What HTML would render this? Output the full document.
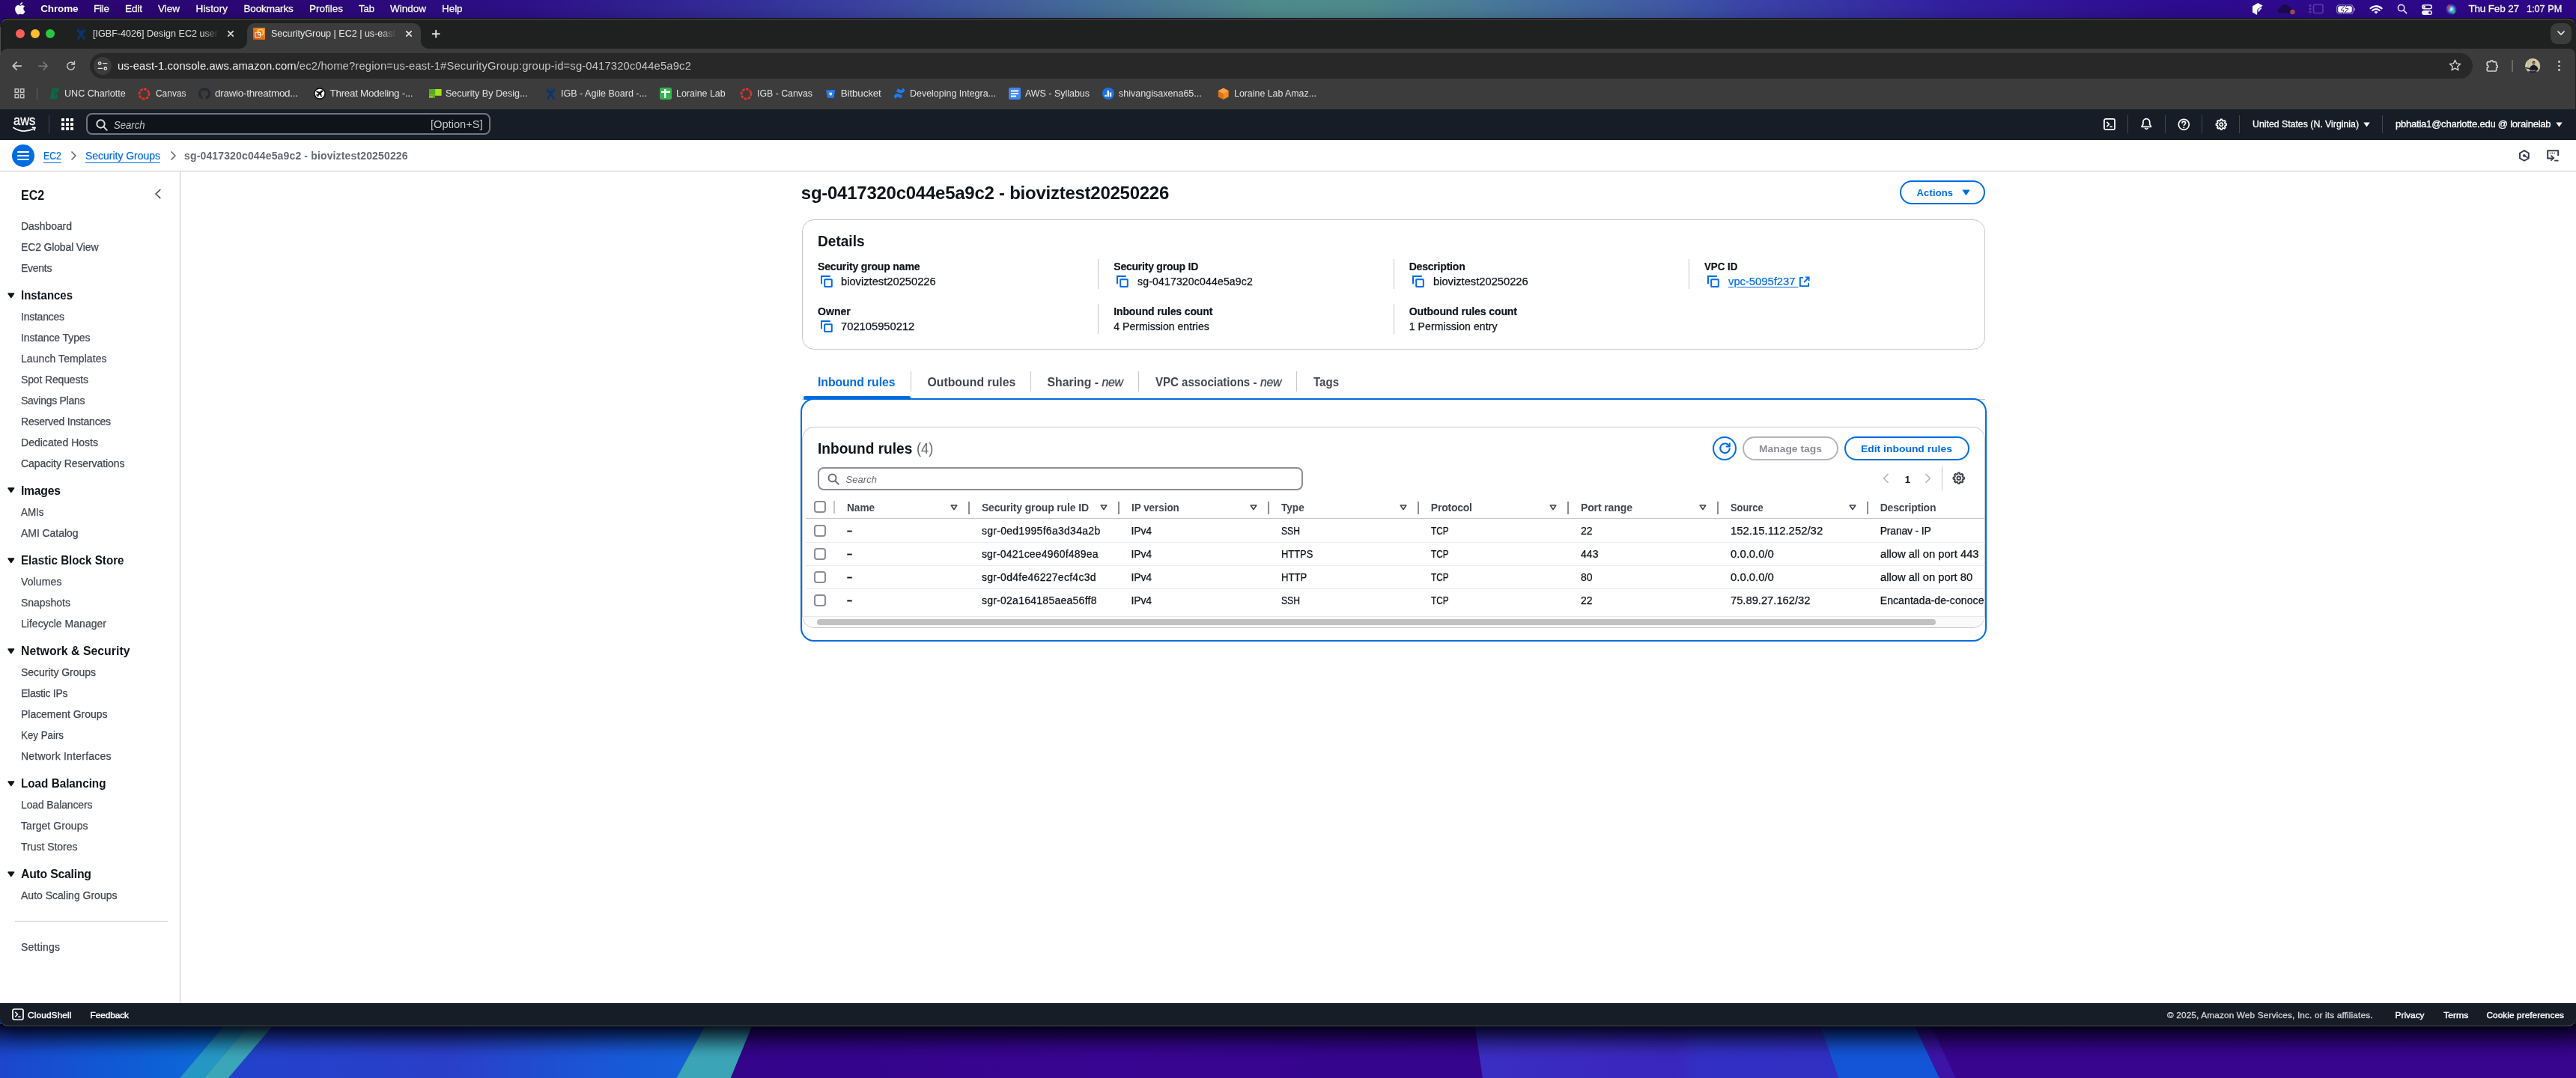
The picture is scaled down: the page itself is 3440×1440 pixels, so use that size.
<!DOCTYPE html>
<html lang="en">
<head>
<meta charset="utf-8">
<title>SecurityGroup | EC2 | us-east-1</title>
<style>
html,body{margin:0;padding:0;}
body{width:3440px;height:1440px;overflow:hidden;position:relative;background:#2a0a7a;font-family:"Liberation Sans", sans-serif;-webkit-font-smoothing:antialiased;}
section,header,nav,main,footer,aside{position:absolute;left:0;top:0;width:0;height:0;display:block;will-change:transform;}
section>div,header>div,nav>div,main>div,footer>div,aside>div{position:absolute;box-sizing:border-box;}
svg{position:absolute;overflow:visible;}
.t{position:absolute;white-space:pre;transform-origin:0 50%;}
</style>
</head>
<body>
<section class="wallpaper">
<svg style="left:0;top:1360px" width="3440" height="80" viewBox="0 1360 3440 80">
<defs>
<linearGradient id="wl" x1="0" x2="1" y1="0" y2="0"><stop offset="0" stop-color="#1c46cc"/><stop offset="0.5" stop-color="#1059d4"/><stop offset="1" stop-color="#0a6ed8"/></linearGradient>
<linearGradient id="wm" x1="0" x2="1" y1="0" y2="0"><stop offset="0" stop-color="#2242cc"/><stop offset="0.45" stop-color="#2a3fc8"/><stop offset="0.8" stop-color="#1858d6"/><stop offset="1" stop-color="#1462d8"/></linearGradient>
<linearGradient id="wp" x1="0" x2="1" y1="0" y2="0"><stop offset="0" stop-color="#34048a"/><stop offset="0.5" stop-color="#380592"/><stop offset="1" stop-color="#35058c"/></linearGradient>
<linearGradient id="wb" x1="0" x2="1" y1="0" y2="0"><stop offset="0" stop-color="#3a2ec2"/><stop offset="0.55" stop-color="#3a26bc"/><stop offset="0.62" stop-color="#3230c4"/><stop offset="1" stop-color="#3030c2"/></linearGradient>
<linearGradient id="wsh" x1="0" x2="0" y1="0" y2="1"><stop offset="0" stop-color="#000010" stop-opacity="0.86"/><stop offset="0.25" stop-color="#000010" stop-opacity="0.55"/><stop offset="0.55" stop-color="#000010" stop-opacity="0.25"/><stop offset="0.8" stop-color="#000010" stop-opacity="0.08"/><stop offset="1" stop-color="#000010" stop-opacity="0"/></linearGradient>
</defs>
<rect x="0" y="1360" width="3440" height="80" fill="#37058f"/>
<polygon points="0,1360 309,1360 240,1440 0,1440" fill="url(#wl)"/>
<polygon points="308.200,1360 341,1360 272.800,1440 240,1440" fill="#2597c4"/>
<polygon points="340.700,1360 373.500,1360 305.300,1440 272.500,1440" fill="#3aa6b8"/>
<polygon points="373.200,1360 948,1360 904,1440 305,1440" fill="url(#wm)"/>
<polygon points="947.400,1360 1009,1360 976.200,1440 903.600,1440" fill="#3ba4b6"/>
<polygon points="1008.600,1360 1968,1360 1980,1440 975.800,1440" fill="url(#wp)"/>
<polygon points="1968,1360 2427,1360 2455,1440 1980,1440" fill="url(#wb)"/>
<polygon points="2427,1360 2552,1360 2590,1440 2455,1440" fill="#1455d8"/>
<polygon points="2552,1360 2574,1360 2612,1440 2590,1440" fill="#3c14a6"/>
<polygon points="2574,1360 3440,1360 3440,1440 2612,1440" fill="#37058e"/>
<rect x="0" y="1368" width="3440" height="44" fill="url(#wsh)"/>
</svg>
</section>
<header class="menubar">
<div style="left:0px;top:0px;width:3440px;height:25px;background:linear-gradient(90deg,#2b0672 0,#2c0878 12%,#2e108a 20.3%,#343099 29%,#3a42a0 33.4%,#456c9a 42%,#508c8c 49.4%,#4f8a8e 53%,#4a7e98 57%,#3f58a6 65%,#3a44a8 68%,#3320a0 75.6%,#2f0c90 84.3%,#2e0688 100%);"></div>
<svg style="left:20.3px;top:3px" width="13.6" height="16.4" viewBox="0 0 814 1000"><path d="M788.1 340.9c-5.8 4.5-108.2 62.2-108.2 190.5 0 148.4 130.3 200.9 134.2 202.2-.6 3.2-20.7 71.9-68.7 141.9-42.8 61.6-87.5 123.1-155.5 123.1s-85.5-39.5-164-39.5c-76.5 0-103.7 40.8-165.9 40.8s-105.6-57-155.5-127C46.7 790.7 0 663 0 541.8c0-194.4 126.4-297.5 250.8-297.5 66.1 0 121.2 43.4 162.7 43.4 39.5 0 101.1-46 176.3-46 28.5 0 130.9 2.6 198.3 99.2zm-234-181.5c31.1-36.9 53.1-88.1 53.1-139.3 0-7.1-.6-14.3-1.9-20.1-50.6 1.9-110.8 33.7-147.1 75.8-28.5 32.4-55.1 83.6-55.1 135.5 0 7.8 1.3 15.6 1.9 18.1 3.2.6 8.4 1.3 13.6 1.3 45.4 0 102.5-30.4 135.5-71.3z" fill="#fff"/></svg>
<span class="t" style="left:54.20px;top:3.25px;font-size:13.5px;line-height:18px;color:#fff;font-weight:700;letter-spacing:-0.123px;text-shadow:0 0 2px rgba(0,0,0,.35);">Chrome</span>
<span class="t" style="left:125.00px;top:3.25px;font-size:13.5px;line-height:18px;color:#fff;letter-spacing:-0.255px;text-shadow:0 0 2px rgba(0,0,0,.35);-webkit-text-stroke:0.3px #fff;">File</span>
<span class="t" style="left:167.00px;top:3.25px;font-size:13.5px;line-height:18px;color:#fff;letter-spacing:-0.089px;text-shadow:0 0 2px rgba(0,0,0,.35);-webkit-text-stroke:0.3px #fff;">Edit</span>
<span class="t" style="left:211.00px;top:3.25px;font-size:13.5px;line-height:18px;color:#fff;letter-spacing:-0.010px;text-shadow:0 0 2px rgba(0,0,0,.35);-webkit-text-stroke:0.3px #fff;">View</span>
<span class="t" style="left:261.40px;top:3.25px;font-size:13.5px;line-height:18px;color:#fff;letter-spacing:0.097px;text-shadow:0 0 2px rgba(0,0,0,.35);-webkit-text-stroke:0.3px #fff;">History</span>
<span class="t" style="left:325.50px;top:3.25px;font-size:13.5px;line-height:18px;color:#fff;letter-spacing:-0.154px;text-shadow:0 0 2px rgba(0,0,0,.35);-webkit-text-stroke:0.3px #fff;">Bookmarks</span>
<span class="t" style="left:413.00px;top:3.25px;font-size:13.5px;line-height:18px;color:#fff;text-shadow:0 0 2px rgba(0,0,0,.35);-webkit-text-stroke:0.3px #fff;">Profiles</span>
<span class="t" style="left:479.00px;top:3.25px;font-size:13.5px;line-height:18px;color:#fff;transform:scaleX(0.9641);text-shadow:0 0 2px rgba(0,0,0,.35);-webkit-text-stroke:0.3px #fff;">Tab</span>
<span class="t" style="left:521.00px;top:3.25px;font-size:13.5px;line-height:18px;color:#fff;text-shadow:0 0 2px rgba(0,0,0,.35);-webkit-text-stroke:0.3px #fff;">Window</span>
<span class="t" style="left:590.00px;top:3.25px;font-size:13.5px;line-height:18px;color:#fff;letter-spacing:-0.055px;text-shadow:0 0 2px rgba(0,0,0,.35);-webkit-text-stroke:0.3px #fff;">Help</span>
<span class="t" style="left:3296.40px;top:3.25px;font-size:13.5px;line-height:18px;color:#fff;letter-spacing:-0.161px;text-shadow:0 0 2px rgba(0,0,0,.35);-webkit-text-stroke:0.3px #fff;">Thu Feb 27</span>
<span class="t" style="left:3373.80px;top:3.25px;font-size:13.5px;line-height:18px;color:#fff;transform:scaleX(0.9387);text-shadow:0 0 2px rgba(0,0,0,.35);-webkit-text-stroke:0.3px #fff;">1:07 PM</span>
<svg style="left:3006px;top:3px" width="18" height="18" viewBox="0 0 18 18"><path d="M2 5.2 9.2 1l6.6 3.6-3 2.1-3.4 2-1 1.4-.3 6.9L2 13.6z" fill="#fff"/><path d="M9.6 9.4l4.4-2.6-.1 2.3-2.2 1.2-.1 1.6-2 1.2z" fill="#fff"/></svg>
<svg style="left:3041px;top:5px" width="26" height="16" viewBox="0 0 26 16"><path d="M5 12.5c-2.6 0-4.4-1.4-4.4-3.4 0-1.9 1.5-3.2 3.5-3.4C4.8 2.9 7.3 1 10.300 1c2.7 0 4.900 1.500 5.800 3.800 2.600.1 4.600 1.800 4.600 4 0 2.100-1.800 3.700-4.300 3.700z" fill="#1d0a52"/><circle cx="20.5" cy="11" r="3.300" fill="#a8504a"/></svg>
<svg style="left:3083px;top:5px" width="20" height="14" viewBox="0 0 20 14" opacity="0.32"><rect x="6.500" y="1" width="12.500" height="11.500" rx="2.500" fill="none" stroke="#b9a8ea" stroke-width="1.600"/><rect x="0.500" y="1" width="3" height="2.800" rx="0.800" fill="#b9a8ea"/><rect x="0.500" y="5.400" width="3" height="2.800" rx="0.800" fill="#b9a8ea"/><rect x="0.500" y="9.800" width="3" height="2.800" rx="0.800" fill="#b9a8ea"/></svg>
<svg style="left:3120px;top:5.500px" width="26" height="13" viewBox="0 0 26 13"><rect x="0.700" y="0.700" width="21.600" height="11.600" rx="3.400" fill="none" stroke="#fff" stroke-opacity="0.550" stroke-width="1.100"/><rect x="2.200" y="2.200" width="18.600" height="8.600" rx="2.100" fill="#fff"/><path d="M23.600 4.300c.9.300 1.500 1.100 1.500 2.200s-.6 1.900-1.500 2.200z" fill="#fff" fill-opacity="0.600"/><path d="M13.500.3 6.600 7.300h3.700l-1.700 5.400 7.100-7h-3.700z" fill="#2e1090" stroke="#2e1090" stroke-width="1.300" stroke-linejoin="round"/><path d="M13.500.3 6.600 7.300h3.700l-1.700 5.400 7.100-7h-3.700z" fill="#fff"/></svg>
<svg style="left:3164px;top:5.500px" width="18" height="13" viewBox="0 0 18 13"><path d="M9 2.500c2.900 0 5.500 1.100 7.500 3" fill="none" stroke="#fff" stroke-width="2.100" stroke-linecap="round" transform="translate(0,-.3)"/><path d="M1.500 5.200c2-1.900 4.600-3 7.500-3s5.500 1.100 7.500 3" fill="none" stroke="#fff" stroke-width="2.100" stroke-linecap="round"/><path d="M4.200 8c1.300-1.200 3-1.900 4.800-1.900s3.500.7 4.800 1.900" fill="none" stroke="#fff" stroke-width="2.100" stroke-linecap="round"/><path d="M9 12.600 6.500 10c.7-.6 1.500-1 2.500-1s1.800.4 2.500 1z" fill="#fff"/></svg>
<svg style="left:3200.500px;top:5px" width="15" height="15" viewBox="0 0 15 15"><circle cx="5.600" cy="5.600" r="4.200" fill="none" stroke="#e4dcf6" stroke-width="1.600"/><path d="M8.800 8.800 12.600 12.600" stroke="#e4dcf6" stroke-width="1.900" stroke-linecap="round"/></svg>
<svg style="left:3233.500px;top:5.500px" width="14" height="14" viewBox="0 0 14 14"><rect x="0.800" y="0.800" width="12.400" height="5" rx="2.500" fill="none" stroke="#fff" stroke-width="1.500"/><circle cx="3.500" cy="3.300" r="1.500" fill="#fff"/><rect x="0" y="8" width="14" height="6" rx="3" fill="#fff"/><circle cx="10.700" cy="11" r="1.700" fill="#2e1090"/></svg>
<svg style="left:3265.500px;top:5px" width="15" height="15" viewBox="0 0 15 15"><defs><radialGradient id="siri" cx="0.500" cy="0.500" r="0.600"><stop offset="0" stop-color="#fff"/><stop offset="0.300" stop-color="#5fd2e6"/><stop offset="0.650" stop-color="#3a3cc8"/><stop offset="1" stop-color="#181a50"/></radialGradient></defs><circle cx="7.500" cy="7.500" r="7.200" fill="url(#siri)"/><path d="M1.200 5.500A7 7 0 0 1 6 .5c-1 2.500-1 5.500 0 7.500-2-.3-3.800-1-4.800-2.500z" fill="#d83a58" fill-opacity="0.900"/><path d="M13.500 10.500a7 7 0 0 1-5 4c.8-2 .6-4.600-.5-6.500 2.300.100 4.300.900 5.500 2.500z" fill="#3acb8a" fill-opacity="0.750"/></svg>
</header>
<section class="chrome">
<div style="left:0px;top:25px;width:3439.5px;height:1345.7px;background:#1f2020;border-radius:11px;box-shadow:0 0 0 1px rgba(0,0,0,.45),0 10px 30px rgba(0,0,10,.55);"></div>
<div style="left:4px;top:24px;width:3432px;height:1.2px;background:#0e0818;"></div>
<div style="left:0px;top:25px;width:3439.5px;height:30px;border-radius:11px 11px 0 0;border-top:1px solid #5a5b5b;"></div>
<div style="left:0px;top:36px;width:1px;height:110px;background:#4c4d4d;"></div>
<div style="left:20.8px;top:39px;width:12px;height:12px;border-radius:50%;background:#fe5f57;"></div>
<div style="left:41px;top:39px;width:12px;height:12px;border-radius:50%;background:#febc2e;"></div>
<div style="left:61px;top:39px;width:12px;height:12px;border-radius:50%;background:#28c840;"></div>
<div style="left:0px;top:65px;width:3439.3px;height:82px;background:#3c3c3c;border-radius:10px 8px 0 0;"></div>
<div style="left:330px;top:31px;width:232px;height:36px;background:#3c3c3c;border-radius:10px 10px 0 0;"></div>
<svg style="left:320px;top:55px" width="10" height="10" viewBox="0 0 10 10"><path d="M10 0v10H0A10 10 0 0 0 10 0z" fill="#3c3c3c"/></svg>
<svg style="left:562px;top:55px" width="10" height="10" viewBox="0 0 10 10"><path d="M0 0v10h10A10 10 0 0 1 0 0z" fill="#3c3c3c"/></svg>
<svg style="left:101.500px;top:37px" width="13" height="16" viewBox="0 0 13 16"><g fill="none" stroke="#093672" stroke-width="2.700" stroke-linecap="round" stroke-linejoin="round"><path d="M1.700 3.300 6.500 8.600 11.300 3.300"/><path d="M2.600 14.600 6.500 8.400 10.400 14.600"/></g><g fill="#093672"><circle cx="6.500" cy="5.300" r="1.700"/><circle cx="3.700" cy="1.100" r=".8"/><circle cx="6.500" cy=".7" r=".8"/><circle cx="9.300" cy="1.100" r=".8"/><path d="M4.800 7.500h3.400l-.5 3h-2.400z"/></g></svg>
<span class="t" style="left:124.00px;top:36.25px;font-size:13.4px;line-height:17px;color:#dfe1e2;transform:scaleX(0.9388);width:179.0px;overflow:hidden;-webkit-mask-image:linear-gradient(90deg,#000 0,#000 155.5px,transparent 179.0px);mask-image:linear-gradient(90deg,#000 0,#000 155.5px,transparent 179.0px);">[IGBF-4026] Design EC2 user</span>
<svg style="left:304.300px;top:41px" width="8" height="8" viewBox="0 0 8 8"><path d="M.8.800l6.400 6.400M7.200.8.800 7.200" stroke="#dfe1e2" stroke-width="1.700" stroke-linecap="round"/></svg>
<svg style="left:338px;top:37px" width="16" height="16" viewBox="0 0 16 16"><defs><linearGradient id="ec2g" x1="0" y1="1" x2="1" y2="0"><stop offset="0" stop-color="#c8511b"/><stop offset="1" stop-color="#f90"/></linearGradient></defs><rect width="16" height="16" rx="1" fill="url(#ec2g)"/><g fill="none" stroke="#fff" stroke-opacity=".85" stroke-width="1.100"><rect x="6.300" y="2.700" width="7" height="7" rx="1.600"/><rect x="2.700" y="6.300" width="7" height="7" rx="1.600" fill="#dd6a1c"/><rect x="6.600" y="6.300" width="3" height="3.300" rx=".8"/></g></svg>
<span class="t" style="left:362.00px;top:36.25px;font-size:13.4px;line-height:17px;color:#e8eaeb;transform:scaleX(0.9358);width:178.5px;overflow:hidden;-webkit-mask-image:linear-gradient(90deg,#000 0,#000 156.0px,transparent 178.5px);mask-image:linear-gradient(90deg,#000 0,#000 156.0px,transparent 178.5px);">SecurityGroup | EC2 | us-east</span>
<svg style="left:542px;top:41px" width="8" height="8" viewBox="0 0 8 8"><path d="M.8.800l6.400 6.400M7.200.8.800 7.200" stroke="#e8eaeb" stroke-width="1.700" stroke-linecap="round"/></svg>
<svg style="left:576.700px;top:40px" width="10.400" height="10.400" viewBox="0 0 11 11"><path d="M5.500.7v9.600M.7 5.500h9.600" stroke="#e3e3e3" stroke-width="2" stroke-linecap="round"/></svg>
<div style="left:3406px;top:31px;width:28px;height:27.5px;background:#3b3c3c;border-radius:9px;"></div>
<svg style="left:3415px;top:41px" width="10" height="7" viewBox="0 0 10 7"><path d="M1 1.200l4 4 4-4" fill="none" stroke="#e3e3e3" stroke-width="1.700" stroke-linecap="round" stroke-linejoin="round"/></svg>
<svg style="left:15.700px;top:81.700px" width="13.200" height="12.300" viewBox="0 0 15 14"><path d="M14 7H1.800M7 1.300 1.300 7 7 12.700" fill="none" stroke="#c7c7c7" stroke-width="1.900" stroke-linecap="round" stroke-linejoin="round"/></svg>
<svg style="left:51.300px;top:81.700px" width="13.200" height="12.300" viewBox="0 0 15 14"><path d="M1 7h12.200M8 1.300 13.700 7 8 12.700" fill="none" stroke="#7d7d7d" stroke-width="1.700" stroke-linecap="round" stroke-linejoin="round"/></svg>
<svg style="left:87.700px;top:81.300px" width="13.300" height="14.200" viewBox="0 0 15 16"><path d="M12.300 5.200A5.600 5.600 0 1 0 12.900 9.500" fill="none" stroke="#c7c7c7" stroke-width="1.700" stroke-linecap="round"/><path d="M12.900 1.200v4.400H8.500" fill="none" stroke="#c7c7c7" stroke-width="1.700" stroke-linecap="round" stroke-linejoin="round"/></svg>
<div style="left:120px;top:71px;width:3181.5px;height:34px;background:#282828;border-radius:17px;"></div>
<div style="left:125px;top:76px;width:24px;height:24px;background:#3c3c3c;border-radius:50%;"></div>
<svg style="left:130px;top:81px" width="14" height="14" viewBox="0 0 14 14"><g fill="none" stroke="#e3e3e3" stroke-width="1.400" stroke-linecap="round"><circle cx="3.200" cy="3.600" r="1.700"/><path d="M7.600 3.600h5.200"/><circle cx="10.800" cy="10.400" r="1.700"/><path d="M1.200 10.400h5.200"/></g></svg>
<span class="t" style="left:157.00px;top:79.25px;font-size:14.8px;line-height:19px;color:#f0f0f0;letter-spacing:0.082px;">us-east-1.console.aws.amazon.com</span>
<span class="t" style="left:395.60px;top:79.25px;font-size:14.8px;line-height:19px;color:#c4c4c4;letter-spacing:0.143px;">/ec2/home?region=us-east-1#SecurityGroup:group-id=sg-0417320c044e5a9c2</span>
<svg style="left:3269.500px;top:79.300px" width="17" height="16" viewBox="0 0 17 16"><path d="M8.500 1.300l2.100 4.600 5 .5-3.800 3.400 1.100 4.900-4.400-2.600-4.400 2.600 1.100-4.900L1.400 6.400l5-.5z" fill="none" stroke="#d4d4d4" stroke-width="1.400" stroke-linejoin="round"/></svg>
<svg style="left:3320.300px;top:78.600px" width="17" height="17" viewBox="0 0 17 17"><path d="M2.700 3.600h3a1.700 1.700 0 0 1 3.400 0h3a1.500 1.500 0 0 1 1.500 1.500v3a1.700 1.700 0 0 1 0 3.400v3a1.500 1.500 0 0 1-1.500 1.500H2.700a1.500 1.500 0 0 1-1.500-1.500v-3a1.700 1.700 0 0 0 0-3.400v-3a1.500 1.500 0 0 1 1.500-1.500z" fill="none" stroke="#d4d4d4" stroke-width="1.600" stroke-linejoin="round"/></svg>
<div style="left:3354.2px;top:80px;width:1.7px;height:15.7px;background:#6a6a6a;"></div>
<svg style="left:3371.800px;top:77.700px" width="20.400" height="20.400" viewBox="0 0 20.400 20.400"><defs><clipPath id="avc"><circle cx="10.200" cy="10.200" r="10.200"/></clipPath><linearGradient id="avbg" x1="0" y1="0" x2="1" y2="0.300"><stop offset="0" stop-color="#e6dcb8"/><stop offset="0.350" stop-color="#cfc6a8"/><stop offset="0.600" stop-color="#d8cdb2"/><stop offset="1" stop-color="#c9bfa4"/></linearGradient></defs><g clip-path="url(#avc)"><rect width="20.400" height="20.400" fill="url(#avbg)"/><rect x="3.200" y="2" width="1.600" height="11" fill="#a9b48c" opacity=".7"/><rect x="6.500" y="0" width="1.200" height="9" fill="#b8ad90" opacity=".8"/><path d="M0 11.500l6 1.500 5.500 3.500 6.500 1.500v3H0z" fill="#262b3a"/><path d="M1 13.200l5 1.300 3.500 2.200-6 .8z" fill="#d9dde2" opacity=".85"/><path d="M5.800 15.500c0-4.200 2.300-6.600 5.600-6.600s5.800 2.300 6 6.200l-2.300 1.700-6.300.6z" fill="#161b2c"/><ellipse cx="11.400" cy="6.700" rx="2" ry="2.400" fill="#8d6a4e"/><path d="M9.300 6.100c0-1.700 1-2.600 2.200-2.600s2.100.9 2.100 2.300c-.7-.7-1.400-1-2.200-1s-1.500.4-2.100 1.300z" fill="#231c19"/><path d="M7.200 15.200l3 .9 3.300-.9 1.200.8-4.500 1.400-3.600-1.200z" fill="#9a7558"/></g></svg>
<div style="left:3416.4px;top:80.9px;width:2.8px;height:2.8px;border-radius:50%;background:#cdcdcd;"></div>
<div style="left:3416.4px;top:86.5px;width:2.8px;height:2.8px;border-radius:50%;background:#cdcdcd;"></div>
<div style="left:3416.4px;top:92.1px;width:2.8px;height:2.8px;border-radius:50%;background:#cdcdcd;"></div>
<svg style="left:19px;top:118px" width="14.200" height="13.800" viewBox="0 0 15 15"><g fill="none" stroke="#c7c7c7" stroke-width="1.500"><rect x="1" y="1" width="4.800" height="4.800"/><rect x="9" y="1" width="4.800" height="4.800"/><rect x="1" y="9" width="4.800" height="4.800"/><rect x="9" y="9" width="4.800" height="4.800"/></g></svg>
<div style="left:48.5px;top:117px;width:1.5px;height:16px;background:#646464;"></div>
<svg style="left:65.500px;top:118px" width="13" height="14" viewBox="0 0 13 14"><path d="M3.600 0h9.200l-1.200 5.200H8.900l.4-1.700H7.700L6.200 10.400h1.600l.4-1.800h2.900L9.900 14H.7z" fill="#0b6945"/><path d="M9 2.500 7.300 7.500l1.200.1-1.300 3.400 3-4.600-1.300-.1z" fill="#0b6945"/></svg>
<span class="t" style="left:86.20px;top:116.25px;font-size:13.4px;line-height:17px;color:#e3e3e3;transform:scaleX(0.9394);">UNC Charlotte</span>
<svg style="left:183.700px;top:116.800px" width="17" height="17" viewBox="0 0 17 17"><circle cx="8.500" cy="8.500" r="6.500" fill="none" stroke="#e2332a" stroke-width="2.700" stroke-dasharray="3.800 1.305" transform="rotate(-12 8.500 8.500)"/></svg>
<span class="t" style="left:207.50px;top:116.25px;font-size:13.4px;line-height:17px;color:#e3e3e3;transform:scaleX(0.8919);">Canvas</span>
<svg style="left:265px;top:117px" width="16" height="16" viewBox="0 0 16 16"><path d="M8 .2a8 8 0 0 0-2.530 15.590c.4.070.550-.170.550-.380v-1.340c-2.230.480-2.700-1.070-2.700-1.070-.360-.930-.890-1.170-.890-1.170-.730-.500.050-.490.050-.490.800.060 1.230.830 1.230.830.710 1.220 1.870.870 2.330.660.070-.520.280-.870.510-1.070-1.780-.200-3.640-.890-3.640-3.950 0-.870.310-1.590.820-2.150-.080-.200-.360-1.020.080-2.120 0 0 .670-.210 2.200.820a7.600 7.600 0 0 1 4 0c1.530-1.040 2.200-.820 2.200-.820.440 1.100.160 1.920.080 2.120.510.560.820 1.270.820 2.150 0 3.070-1.870 3.750-3.650 3.950.290.250.540.730.540 1.480v2.190c0 .210.150.460.550.380A8 8 0 0 0 8 .2z" fill="#24292f"/></svg>
<span class="t" style="left:287.00px;top:116.25px;font-size:13.4px;line-height:17px;color:#e3e3e3;letter-spacing:-0.242px;">drawio-threatmod...</span>
<svg style="left:419px;top:117px" width="16" height="16" viewBox="0 0 16 16"><circle cx="8" cy="8" r="7.100" fill="#fff" stroke="#0a0a0a" stroke-width="1.500"/><path d="M12.300 3.700c.5.500-.2 1.700-1.100 2.600L9.900 7.600l1 4.300-1 .9-1.900-3.500-1.700 1.500.1 1.500-.7.600-1-1.900-1.900-1 .6-.7 1.500.1 1.500-1.700L2.900 5.800l.9-1 4.300 1 1.300-1.300c.9-.9 2.400-1.300 2.900-.8z" fill="#0a0a0a"/></svg>
<span class="t" style="left:440.60px;top:116.25px;font-size:13.4px;line-height:17px;color:#e3e3e3;letter-spacing:-0.274px;">Threat Modeling -...</span>
<svg style="left:572.900px;top:119.100px" width="16.600" height="11.600" viewBox="0 0 16.600 11.600"><rect x="0" y="0" width="8.100" height="6.500" fill="#58a81c"/><rect x="8.100" y="0" width="8.500" height="8.800" fill="#a4e01e"/><rect x="0" y="6.500" width="8.100" height="2.300" fill="#72c21c"/><rect x="0" y="9.300" width="5" height="2.300" fill="#a2e020"/><rect x="5" y="9.300" width="3.100" height="2.300" fill="#68b41a"/></svg>
<span class="t" style="left:595.00px;top:116.25px;font-size:13.4px;line-height:17px;color:#e3e3e3;transform:scaleX(0.9371);">Security By Desig...</span>
<svg style="left:728.700px;top:117.200px" width="13" height="16" viewBox="0 0 13 16"><g fill="none" stroke="#093672" stroke-width="2.700" stroke-linecap="round" stroke-linejoin="round"><path d="M1.700 3.300 6.500 8.600 11.300 3.300"/><path d="M2.600 14.600 6.500 8.400 10.400 14.600"/></g><g fill="#093672"><circle cx="6.500" cy="5.300" r="1.700"/><circle cx="3.700" cy="1.100" r=".8"/><circle cx="6.500" cy=".7" r=".8"/><circle cx="9.300" cy="1.100" r=".8"/><path d="M4.800 7.500h3.400l-.5 3h-2.400z"/></g></svg>
<span class="t" style="left:749.00px;top:116.25px;font-size:13.4px;line-height:17px;color:#e3e3e3;transform:scaleX(0.9364);">IGB - Agile Board -...</span>
<svg style="left:881px;top:117px" width="16" height="16" viewBox="0 0 16 16"><rect width="16" height="16" rx="2.200" fill="#36b24e"/><path d="M7.200 2v12M2 5.800h12" stroke="#fff" stroke-width="2.300"/></svg>
<span class="t" style="left:903.00px;top:116.25px;font-size:13.4px;line-height:17px;color:#e3e3e3;transform:scaleX(0.9288);">Loraine Lab</span>
<svg style="left:987.700px;top:116.800px" width="17" height="17" viewBox="0 0 17 17"><circle cx="8.500" cy="8.500" r="6.500" fill="none" stroke="#e2332a" stroke-width="2.700" stroke-dasharray="3.800 1.305" transform="rotate(-12 8.500 8.500)"/></svg>
<span class="t" style="left:1011.00px;top:116.25px;font-size:13.4px;line-height:17px;color:#e3e3e3;transform:scaleX(0.9207);">IGB - Canvas</span>
<svg style="left:1103px;top:119.500px" width="12.400" height="11" viewBox="0 0 12.400 11"><path d="M.2.300h12l-1.700 10.400H1.900z" fill="#2a7df0"/><path d="M4.300 3.800h3.900l-.6 3.500H5z" fill="#fff"/></svg>
<span class="t" style="left:1122.80px;top:116.25px;font-size:13.4px;line-height:17px;color:#e3e3e3;letter-spacing:-0.137px;">Bitbucket</span>
<svg style="left:1193.300px;top:117.200px" width="16" height="15.600" viewBox="0 0 16 15.600"><path d="M.5 11.800C2.600 8.300 5 7.200 8.600 8.900l3.300 1.500-1.700 3.900-3.400-1.600c-1.400-.6-2.200-.3-3.100 1.100L3 15z" fill="#1f7af0"/><path d="M15.500 3.800C13.400 7.300 11 8.400 7.400 6.700L4.100 5.200 5.800 1.300l3.400 1.600c1.400.6 2.200.3 3.100-1.100L13 .6z" fill="#1f7af0"/></svg>
<span class="t" style="left:1215.00px;top:116.25px;font-size:13.4px;line-height:17px;color:#e3e3e3;transform:scaleX(0.9306);">Developing Integra...</span>
<svg style="left:1347px;top:117px" width="16" height="16" viewBox="0 0 16 16"><rect width="16" height="16" rx="2.500" fill="#4285f4"/><path d="M3 4.600h10M3 8h10M3 11.400h7" stroke="#fff" stroke-width="2"/></svg>
<span class="t" style="left:1369.00px;top:116.25px;font-size:13.4px;line-height:17px;color:#e3e3e3;transform:scaleX(0.9294);">AWS - Syllabus</span>
<svg style="left:1472px;top:117px" width="16" height="16" viewBox="0 0 16 16"><circle cx="8" cy="8" r="8" fill="#1a73e0"/><path d="M4.600 12v-2.200M7.800 12V4M11 12V6.600" stroke="#fff" stroke-width="2.400"/></svg>
<span class="t" style="left:1493.70px;top:116.25px;font-size:13.4px;line-height:17px;color:#e3e3e3;transform:scaleX(0.9360);">shivangisaxena65...</span>
<svg style="left:1626.300px;top:116.800px" width="15.600" height="16.500" viewBox="0 0 17 18"><path d="M8.500.8 16 4.700v8.600L8.500 17.200 1 13.300V4.700z" fill="#f58a1f"/><path d="M8.500 9v8.200L1 13.300V4.700z" fill="#e0701c"/><path d="M8.500.8 16 4.700 8.500 9 1 4.700z" fill="#fba446"/></svg>
<span class="t" style="left:1648.00px;top:116.25px;font-size:13.4px;line-height:17px;color:#e3e3e3;transform:scaleX(0.9235);">Loraine Lab Amaz...</span>
</section>
<nav class="awsnav">
<div style="left:0px;top:146px;width:3439.5px;height:40.5px;background:#161d26;"></div>
<span class="t" style="left:17.60px;top:150.25px;font-size:17.8px;line-height:23px;color:#fff;transform:scaleX(0.9233);-webkit-text-stroke:.3px #fff;">aws</span>
<svg style="left:16.800px;top:168.600px" width="33" height="9" viewBox="0 0 33 9"><path d="M1 1.500c4.500 3.200 9.500 4.600 14.500 4.600 4.300 0 8.600-1 12.500-3" fill="none" stroke="#fff" stroke-width="1.700" stroke-linecap="round"/><path d="M26.300 1.200l3.900.200-1.500 3.600" fill="none" stroke="#fff" stroke-width="1.500" stroke-linecap="round" stroke-linejoin="round"/></svg>
<div style="left:65px;top:154px;width:1px;height:24px;background:#424650;"></div>
<svg style="left:82px;top:158px" width="16" height="16" viewBox="0 0 16 16"><g fill="#fff"><rect x="0" y="0" width="4" height="4" rx=".4"/><rect x="0" y="6" width="4" height="4" rx=".4"/><rect x="0" y="12" width="4" height="4" rx=".4"/><rect x="6" y="0" width="4" height="4" rx=".4"/><rect x="6" y="6" width="4" height="4" rx=".4"/><rect x="6" y="12" width="4" height="4" rx=".4"/><rect x="12" y="0" width="4" height="4" rx=".4"/><rect x="12" y="6" width="4" height="4" rx=".4"/><rect x="12" y="12" width="4" height="4" rx=".4"/></g></svg>
<div style="left:115px;top:150.8px;width:540px;height:29.2px;background:#0f141a;border:2px solid #707683;border-radius:8px;"></div>
<svg style="left:127.500px;top:159px" width="16" height="16" viewBox="0 0 16 16"><circle cx="6.500" cy="6.500" r="5.200" fill="none" stroke="#dedee3" stroke-width="1.900"/><path d="M10.400 10.400 14.800 14.800" stroke="#dedee3" stroke-width="1.900" stroke-linecap="round"/></svg>
<span class="t" style="left:152.00px;top:159.25px;font-size:13.8px;line-height:18px;color:#c6c6cd;font-style:italic;transform:scaleX(0.9492);">Search</span>
<span class="t" style="left:575.00px;top:158.25px;font-size:13.8px;line-height:18px;color:#c6c6cd;transform:scaleX(1.0613);">[Option+S]</span>
<svg style="left:2808.800px;top:157.900px" width="16" height="16" viewBox="0 0 17 17"><rect x="1" y="1" width="15" height="15" rx="2.200" fill="none" stroke="#fff" stroke-width="1.900"/><path d="M4.600 5.200 8 8.500l-3.400 3.300" fill="none" stroke="#fff" stroke-width="1.800" stroke-linejoin="round"/><path d="M9 12h3.600" stroke="#fff" stroke-width="1.800"/></svg>
<div style="left:2840.5px;top:154px;width:1px;height:24px;background:#424650;"></div>
<div style="left:2890.5px;top:154px;width:1px;height:24px;background:#424650;"></div>
<div style="left:2939.5px;top:154px;width:1px;height:24px;background:#424650;"></div>
<div style="left:2989.5px;top:154px;width:1px;height:24px;background:#424650;"></div>
<div style="left:3181.0px;top:154px;width:1px;height:24px;background:#424650;"></div>
<svg style="left:2858px;top:157.400px" width="16.600" height="16.600" viewBox="0 0 18 18"><path d="M9 1.800c-2.900 0-4.800 2.200-4.800 5v3.100L2.300 12.700v.7h13.400v-.7l-1.900-2.800V6.800c0-2.800-1.900-5-4.800-5z" fill="none" stroke="#fff" stroke-width="1.900" stroke-linejoin="round"/><path d="M6.800 15.200c.4.900 1.200 1.400 2.200 1.400s1.800-.5 2.200-1.400" fill="none" stroke="#fff" stroke-width="1.800"/></svg>
<svg style="left:2907.700px;top:157.600px" width="16.600" height="16.600" viewBox="0 0 18 18"><circle cx="9" cy="9" r="7.600" fill="none" stroke="#fff" stroke-width="1.900"/><path d="M6.500 7.200c0-1.500 1.100-2.500 2.500-2.500s2.500 1 2.500 2.300c0 1.900-2.500 1.900-2.500 3.800" fill="none" stroke="#fff" stroke-width="1.800"/><circle cx="9" cy="13.200" r="1.100" fill="#fff"/></svg>
<svg style="left:2957.600px;top:157.600px" width="16.600" height="16.600" viewBox="0 0 16 16"><path d="M7.100.9h1.800l.4 1.700c.4.100.8.300 1.200.500l1.500-.900 1.300 1.300-.900 1.500c.2.400.4.800.5 1.200l1.700.4v1.800l-1.700.4c-.1.400-.3.800-.5 1.200l.9 1.500-1.300 1.300-1.500-.900c-.4.200-.8.400-1.200.5l-.4 1.700H7.100l-.4-1.700c-.4-.1-.8-.3-1.200-.5l-1.500.9-1.300-1.300.9-1.500c-.2-.4-.4-.8-.5-1.200L1.400 8.400V6.600l1.700-.4c.1-.4.3-.8.5-1.200l-.9-1.500L4 2.200l1.500.9c.4-.2.8-.4 1.200-.5z" fill="none" stroke="#fff" stroke-width="1.700" stroke-linejoin="round" transform="translate(0,.5)"/><circle cx="8" cy="8" r="2.100" fill="none" stroke="#fff" stroke-width="1.600"/></svg>
<span class="t" style="left:3007.50px;top:157.25px;font-size:13px;line-height:17px;color:#fff;transform:scaleX(0.9464);-webkit-text-stroke:.3px #fff;">United States (N. Virginia)</span>
<svg style="left:3155.500px;top:163px" width="9" height="7" viewBox="0 0 9 7"><path d="M.3.500h8.400L4.500 6.500z" fill="#fff"/></svg>
<span class="t" style="left:3199.00px;top:157.25px;font-size:13px;line-height:17px;color:#fff;letter-spacing:-0.219px;-webkit-text-stroke:.3px #fff;">pbhatia1@charlotte.edu @ lorainelab</span>
<svg style="left:3412.500px;top:163px" width="9" height="7" viewBox="0 0 9 7"><path d="M.3.500h8.400L4.500 6.500z" fill="#fff"/></svg>
</nav>
<nav class="crumbs">
<div style="left:0px;top:186.5px;width:3439.5px;height:1153.5px;background:#fff;"></div>
<div style="left:0px;top:228px;width:3439.5px;height:1px;background:#c6c6cd;"></div>
<div style="left:16px;top:193px;width:30px;height:30px;background:#006ce0;border-radius:50%;"></div>
<svg style="left:23px;top:201px" width="16" height="14" viewBox="0 0 16 14"><path d="M1 2h14M1 7h14M1 12h14" stroke="#fff" stroke-width="2" stroke-linecap="round"/></svg>
<span class="t" style="left:58.00px;top:199.25px;font-size:14px;line-height:18px;color:#006ce0;text-decoration:underline;text-underline-offset:3px;text-decoration-thickness:1px;transform:scaleX(0.8702);-webkit-text-stroke:.2px #006ce0;text-underline-offset:4px;">EC2</span>
<svg style="left:94px;top:201px" width="9" height="14" viewBox="0 0 9 14"><path d="M1.500 1.500 7 7l-5.500 5.500" fill="none" stroke="#656871" stroke-width="1.600" stroke-linejoin="round"/></svg>
<span class="t" style="left:114.00px;top:199.25px;font-size:14px;line-height:18px;color:#006ce0;text-decoration:underline;text-underline-offset:3px;text-decoration-thickness:1px;letter-spacing:-0.027px;-webkit-text-stroke:.2px #006ce0;text-underline-offset:4px;">Security Groups</span>
<svg style="left:227px;top:201px" width="9" height="14" viewBox="0 0 9 14"><path d="M1.500 1.500 7 7l-5.500 5.500" fill="none" stroke="#656871" stroke-width="1.600" stroke-linejoin="round"/></svg>
<span class="t" style="left:246.00px;top:199.25px;font-size:14px;line-height:18px;color:#656871;font-weight:700;letter-spacing:0.148px;">sg-0417320c044e5a9c2 - bioviztest20250226</span>
<svg style="left:3363.100px;top:200px" width="15.800" height="15.800" viewBox="0 0 18 18"><path d="M9 1.200l6.700 3.900v7.800L9 16.800l-6.700-3.900V5.100z" fill="none" stroke="#353b48" stroke-width="2.200" stroke-linejoin="round"/><circle cx="9" cy="9" r="2.100" fill="#353b48"/><path d="M9 9l5.600 3.400" stroke="#353b48" stroke-width="1.900"/></svg>
<svg style="left:3400.700px;top:200px" width="16.400" height="16.400" viewBox="0 0 18 18"><path d="M16.700 8.700V1.300H1.300v11.200h8" fill="none" stroke="#353b48" stroke-width="2.200" stroke-linejoin="round"/><path d="M4.100 5h1.600M7.200 5h1.600M10.300 5h1.600" stroke="#353b48" stroke-width="1.700"/><path d="M5.900 8.300l4.300 3.900-4.300 3.900" fill="none" stroke="#353b48" stroke-width="1.900"/><path d="M11.200 16h5.900" stroke="#353b48" stroke-width="1.900"/></svg>
</nav>
<aside class="sidebar">
<div style="left:240px;top:229px;width:1px;height:1111px;background:#c6c6cd;"></div>
<span class="t" style="left:28.00px;top:250.25px;font-size:18px;line-height:23px;color:#0f141a;font-weight:700;transform:scaleX(0.8910);">EC2</span>
<svg style="left:205.500px;top:252px" width="10" height="14" viewBox="0 0 10 14"><path d="M8.300 1 2 7l6.300 6" fill="none" stroke="#424650" stroke-width="1.700" stroke-linejoin="round"/></svg>
<span class="t" style="left:28.00px;top:293.25px;font-size:14px;line-height:18px;color:#424650;letter-spacing:-0.062px;-webkit-text-stroke:.25px #424650;">Dashboard</span>
<span class="t" style="left:28.00px;top:321.25px;font-size:14px;line-height:18px;color:#424650;letter-spacing:-0.148px;-webkit-text-stroke:.25px #424650;">EC2 Global View</span>
<span class="t" style="left:28.00px;top:349.25px;font-size:14px;line-height:18px;color:#424650;letter-spacing:-0.263px;-webkit-text-stroke:.25px #424650;">Events</span>
<svg style="left:10.300px;top:390.7px" width="9.600" height="7.600" viewBox="0 0 9.600 7.600"><path d="M1 1h7.600L4.800 6.600z" fill="#0f141a" stroke="#0f141a" stroke-width="1.400" stroke-linejoin="round"/></svg>
<span class="t" style="left:28.00px;top:384.25px;font-size:15.8px;line-height:21px;color:#0f141a;font-weight:700;transform:scaleX(0.9466);">Instances</span>
<span class="t" style="left:28.00px;top:414.25px;font-size:14px;line-height:18px;color:#424650;letter-spacing:-0.242px;-webkit-text-stroke:.25px #424650;">Instances</span>
<span class="t" style="left:28.00px;top:442.25px;font-size:14px;line-height:18px;color:#424650;letter-spacing:-0.109px;-webkit-text-stroke:.25px #424650;">Instance Types</span>
<span class="t" style="left:28.00px;top:470.25px;font-size:14px;line-height:18px;color:#424650;letter-spacing:0.075px;-webkit-text-stroke:.25px #424650;">Launch Templates</span>
<span class="t" style="left:28.00px;top:498.25px;font-size:14px;line-height:18px;color:#424650;letter-spacing:-0.154px;-webkit-text-stroke:.25px #424650;">Spot Requests</span>
<span class="t" style="left:28.00px;top:526.25px;font-size:14px;line-height:18px;color:#424650;letter-spacing:-0.268px;-webkit-text-stroke:.25px #424650;">Savings Plans</span>
<span class="t" style="left:28.00px;top:554.25px;font-size:14px;line-height:18px;color:#424650;letter-spacing:-0.220px;-webkit-text-stroke:.25px #424650;">Reserved Instances</span>
<span class="t" style="left:28.00px;top:582.25px;font-size:14px;line-height:18px;color:#424650;letter-spacing:0.020px;-webkit-text-stroke:.25px #424650;">Dedicated Hosts</span>
<span class="t" style="left:28.00px;top:610.25px;font-size:14px;line-height:18px;color:#424650;letter-spacing:-0.078px;-webkit-text-stroke:.25px #424650;">Capacity Reservations</span>
<svg style="left:10.300px;top:650.7px" width="9.600" height="7.600" viewBox="0 0 9.600 7.600"><path d="M1 1h7.600L4.800 6.600z" fill="#0f141a" stroke="#0f141a" stroke-width="1.400" stroke-linejoin="round"/></svg>
<span class="t" style="left:28.00px;top:645.25px;font-size:15.8px;line-height:21px;color:#0f141a;font-weight:700;letter-spacing:-0.291px;">Images</span>
<span class="t" style="left:28.00px;top:675.25px;font-size:14px;line-height:18px;color:#424650;transform:scaleX(0.9564);-webkit-text-stroke:.25px #424650;">AMIs</span>
<span class="t" style="left:28.00px;top:703.25px;font-size:14px;line-height:18px;color:#424650;letter-spacing:-0.055px;-webkit-text-stroke:.25px #424650;">AMI Catalog</span>
<svg style="left:10.300px;top:744.7px" width="9.600" height="7.600" viewBox="0 0 9.600 7.600"><path d="M1 1h7.600L4.800 6.600z" fill="#0f141a" stroke="#0f141a" stroke-width="1.400" stroke-linejoin="round"/></svg>
<span class="t" style="left:28.00px;top:738.25px;font-size:15.8px;line-height:21px;color:#0f141a;font-weight:700;transform:scaleX(0.9608);">Elastic Block Store</span>
<span class="t" style="left:28.00px;top:768.25px;font-size:14px;line-height:18px;color:#424650;letter-spacing:0.133px;-webkit-text-stroke:.25px #424650;">Volumes</span>
<span class="t" style="left:28.00px;top:796.25px;font-size:14px;line-height:18px;color:#424650;letter-spacing:-0.021px;-webkit-text-stroke:.25px #424650;">Snapshots</span>
<span class="t" style="left:28.00px;top:824.25px;font-size:14px;line-height:18px;color:#424650;letter-spacing:0.023px;-webkit-text-stroke:.25px #424650;">Lifecycle Manager</span>
<svg style="left:10.300px;top:865.7px" width="9.600" height="7.600" viewBox="0 0 9.600 7.600"><path d="M1 1h7.600L4.800 6.600z" fill="#0f141a" stroke="#0f141a" stroke-width="1.400" stroke-linejoin="round"/></svg>
<span class="t" style="left:28.00px;top:859.25px;font-size:15.8px;line-height:21px;color:#0f141a;font-weight:700;letter-spacing:0.038px;">Network &amp; Security</span>
<span class="t" style="left:28.00px;top:889.25px;font-size:14px;line-height:18px;color:#424650;letter-spacing:-0.027px;-webkit-text-stroke:.25px #424650;">Security Groups</span>
<span class="t" style="left:28.00px;top:917.25px;font-size:14px;line-height:18px;color:#424650;letter-spacing:-0.286px;-webkit-text-stroke:.25px #424650;">Elastic IPs</span>
<span class="t" style="left:28.00px;top:945.25px;font-size:14px;line-height:18px;color:#424650;letter-spacing:-0.030px;-webkit-text-stroke:.25px #424650;">Placement Groups</span>
<span class="t" style="left:28.00px;top:973.25px;font-size:14px;line-height:18px;color:#424650;transform:scaleX(0.9512);-webkit-text-stroke:.25px #424650;">Key Pairs</span>
<span class="t" style="left:28.00px;top:1001.25px;font-size:14px;line-height:18px;color:#424650;letter-spacing:0.222px;-webkit-text-stroke:.25px #424650;">Network Interfaces</span>
<svg style="left:10.300px;top:1042.7px" width="9.600" height="7.600" viewBox="0 0 9.600 7.600"><path d="M1 1h7.600L4.800 6.600z" fill="#0f141a" stroke="#0f141a" stroke-width="1.400" stroke-linejoin="round"/></svg>
<span class="t" style="left:28.00px;top:1036.25px;font-size:15.8px;line-height:21px;color:#0f141a;font-weight:700;transform:scaleX(0.9649);">Load Balancing</span>
<span class="t" style="left:28.00px;top:1066.25px;font-size:14px;line-height:18px;color:#424650;letter-spacing:-0.138px;-webkit-text-stroke:.25px #424650;">Load Balancers</span>
<span class="t" style="left:28.00px;top:1094.25px;font-size:14px;line-height:18px;color:#424650;letter-spacing:0.065px;-webkit-text-stroke:.25px #424650;">Target Groups</span>
<span class="t" style="left:28.00px;top:1122.25px;font-size:14px;line-height:18px;color:#424650;letter-spacing:-0.021px;-webkit-text-stroke:.25px #424650;">Trust Stores</span>
<svg style="left:10.300px;top:1163.7px" width="9.600" height="7.600" viewBox="0 0 9.600 7.600"><path d="M1 1h7.600L4.800 6.600z" fill="#0f141a" stroke="#0f141a" stroke-width="1.400" stroke-linejoin="round"/></svg>
<span class="t" style="left:28.00px;top:1157.25px;font-size:15.8px;line-height:21px;color:#0f141a;font-weight:700;letter-spacing:-0.232px;">Auto Scaling</span>
<span class="t" style="left:28.00px;top:1187.25px;font-size:14px;line-height:18px;color:#424650;letter-spacing:0.005px;-webkit-text-stroke:.25px #424650;">Auto Scaling Groups</span>
<div style="left:20px;top:1230px;width:204px;height:1px;background:#c6c6cd;"></div>
<span class="t" style="left:28.00px;top:1256.25px;font-size:14px;line-height:18px;color:#424650;letter-spacing:0.201px;-webkit-text-stroke:.25px #424650;">Settings</span>
</aside>
<footer class="footer">
<div style="left:0px;top:1340px;width:3439.5px;height:30.7px;background:#161d26;border-radius:0 0 11px 11px;border-bottom:1px solid #4a4f57;"></div>
<svg style="left:16px;top:1347px" width="16" height="16" viewBox="0 0 16 16"><rect x="1" y="1" width="14" height="14" rx="2.200" fill="none" stroke="#fff" stroke-width="1.700"/><path d="M4.300 4.800 7.500 8l-3.200 3.200" fill="none" stroke="#fff" stroke-width="1.600" stroke-linejoin="round"/><path d="M8.300 11.300h3.300" stroke="#fff" stroke-width="1.600"/></svg>
<span class="t" style="left:37.00px;top:1349.25px;font-size:11.8px;line-height:15px;color:#fff;letter-spacing:0.160px;-webkit-text-stroke:.4px #fff;">CloudShell</span>
<span class="t" style="left:120.50px;top:1349.25px;font-size:11.8px;line-height:15px;color:#fff;letter-spacing:-0.045px;-webkit-text-stroke:.4px #fff;">Feedback</span>
<span class="t" style="left:2894.00px;top:1349.25px;font-size:11.8px;line-height:15px;color:#d5d5da;letter-spacing:0.142px;-webkit-text-stroke:.3px #d5d5da;">© 2025, Amazon Web Services, Inc. or its affiliates.</span>
<span class="t" style="left:3198.50px;top:1349.25px;font-size:11.8px;line-height:15px;color:#fff;letter-spacing:0.052px;-webkit-text-stroke:.4px #fff;">Privacy</span>
<span class="t" style="left:3262.50px;top:1349.25px;font-size:11.8px;line-height:15px;color:#fff;transform:scaleX(1.0428);-webkit-text-stroke:.4px #fff;">Terms</span>
<span class="t" style="left:3320.50px;top:1349.25px;font-size:11.8px;line-height:15px;color:#fff;letter-spacing:0.071px;-webkit-text-stroke:.4px #fff;">Cookie preferences</span>
</footer>
<main class="main">
<span class="t" style="left:1069.80px;top:242.25px;font-size:24px;line-height:31px;color:#0f141a;font-weight:700;letter-spacing:-0.255px;">sg-0417320c044e5a9c2 - bioviztest20250226</span>
<div style="left:2536.8px;top:241px;width:113.8px;height:31.5px;border:2px solid #006ce0;border-radius:16px;background:#fff;"></div>
<span class="t" style="left:2559.60px;top:249.25px;font-size:13px;line-height:17px;color:#006ce0;font-weight:700;letter-spacing:0.121px;">Actions</span>
<svg style="left:2619.500px;top:252.500px" width="11" height="9" viewBox="0 0 11 9"><path d="M.3.500h10.400L5.500 8.300z" fill="#006ce0"/></svg>
<div style="left:1071px;top:293px;width:1580px;height:174px;border:1px solid #c6c6cd;border-radius:16px;background:#fff;"></div>
<span class="t" style="left:1092.00px;top:309.25px;font-size:20px;line-height:26px;color:#0f141a;font-weight:700;transform:scaleX(0.9544);">Details</span>
<span class="t" style="left:1092.00px;top:347.25px;font-size:14px;line-height:18px;color:#0f141a;font-weight:700;letter-spacing:-0.154px;-webkit-text-stroke:.2px #0f141a;">Security group name</span>
<svg style="left:1095.5px;top:368px" width="17" height="16" viewBox="0 0 17 16"><path d="M1 11.300V1h11.800" fill="none" stroke="#006ce0" stroke-width="2"/><rect x="5.200" y="5.200" width="9.600" height="9.800" rx=".6" fill="none" stroke="#006ce0" stroke-width="2" stroke-linejoin="round"/></svg>
<span class="t" style="left:1123.30px;top:367.25px;font-size:14px;line-height:18px;color:#0f141a;transform:scaleX(1.0501);-webkit-text-stroke:.25px #0f141a;">bioviztest20250226</span>
<span class="t" style="left:1487.30px;top:347.25px;font-size:14px;line-height:18px;color:#0f141a;font-weight:700;letter-spacing:-0.230px;-webkit-text-stroke:.2px #0f141a;">Security group ID</span>
<svg style="left:1491px;top:368px" width="17" height="16" viewBox="0 0 17 16"><path d="M1 11.300V1h11.800" fill="none" stroke="#006ce0" stroke-width="2"/><rect x="5.200" y="5.200" width="9.600" height="9.800" rx=".6" fill="none" stroke="#006ce0" stroke-width="2" stroke-linejoin="round"/></svg>
<span class="t" style="left:1519.00px;top:367.25px;font-size:14px;line-height:18px;color:#0f141a;letter-spacing:0.187px;-webkit-text-stroke:.25px #0f141a;">sg-0417320c044e5a9c2</span>
<span class="t" style="left:1881.70px;top:347.25px;font-size:14px;line-height:18px;color:#0f141a;font-weight:700;letter-spacing:-0.202px;-webkit-text-stroke:.2px #0f141a;">Description</span>
<svg style="left:1885.5px;top:368px" width="17" height="16" viewBox="0 0 17 16"><path d="M1 11.300V1h11.800" fill="none" stroke="#006ce0" stroke-width="2"/><rect x="5.200" y="5.200" width="9.600" height="9.800" rx=".6" fill="none" stroke="#006ce0" stroke-width="2" stroke-linejoin="round"/></svg>
<span class="t" style="left:1914.00px;top:367.25px;font-size:14px;line-height:18px;color:#0f141a;transform:scaleX(1.0501);-webkit-text-stroke:.25px #0f141a;">bioviztest20250226</span>
<span class="t" style="left:2276.00px;top:347.25px;font-size:14px;line-height:18px;color:#0f141a;font-weight:700;transform:scaleX(0.9489);-webkit-text-stroke:.2px #0f141a;">VPC ID</span>
<svg style="left:2279.7px;top:368px" width="17" height="16" viewBox="0 0 17 16"><path d="M1 11.300V1h11.800" fill="none" stroke="#006ce0" stroke-width="2"/><rect x="5.200" y="5.200" width="9.600" height="9.800" rx=".6" fill="none" stroke="#006ce0" stroke-width="2" stroke-linejoin="round"/></svg>
<span class="t" style="left:2308.00px;top:367.25px;font-size:14px;line-height:18px;color:#006ce0;text-decoration:underline;text-underline-offset:3px;text-decoration-thickness:1px;transform:scaleX(1.0537);text-underline-offset:2px;-webkit-text-stroke:.2px #006ce0;">vpc-5095f237 </span>
<svg style="left:2402.200px;top:368.800px" width="15" height="15" viewBox="0 0 16 16"><path d="M6.500 2H2v12h12V9.500" fill="none" stroke="#006ce0" stroke-width="2" stroke-linejoin="round"/><path d="M9.500 1.500h5v5M14 2 7.500 8.500" fill="none" stroke="#006ce0" stroke-width="2"/></svg>
<span class="t" style="left:1092.00px;top:407.25px;font-size:14px;line-height:18px;color:#0f141a;font-weight:700;letter-spacing:0.055px;-webkit-text-stroke:.2px #0f141a;">Owner</span>
<svg style="left:1095.5px;top:428px" width="17" height="16" viewBox="0 0 17 16"><path d="M1 11.300V1h11.800" fill="none" stroke="#006ce0" stroke-width="2"/><rect x="5.200" y="5.200" width="9.600" height="9.800" rx=".6" fill="none" stroke="#006ce0" stroke-width="2" stroke-linejoin="round"/></svg>
<span class="t" style="left:1123.30px;top:427.25px;font-size:14px;line-height:18px;color:#0f141a;transform:scaleX(1.0520);-webkit-text-stroke:.25px #0f141a;">702105950212</span>
<span class="t" style="left:1487.30px;top:407.25px;font-size:14px;line-height:18px;color:#0f141a;font-weight:700;letter-spacing:-0.141px;-webkit-text-stroke:.2px #0f141a;">Inbound rules count</span>
<span class="t" style="left:1487.30px;top:427.25px;font-size:14px;line-height:18px;color:#0f141a;letter-spacing:0.030px;-webkit-text-stroke:.25px #0f141a;">4 Permission entries</span>
<span class="t" style="left:1881.70px;top:407.25px;font-size:14px;line-height:18px;color:#0f141a;font-weight:700;letter-spacing:-0.101px;-webkit-text-stroke:.2px #0f141a;">Outbound rules count</span>
<span class="t" style="left:1881.70px;top:427.25px;font-size:14px;line-height:18px;color:#0f141a;letter-spacing:0.110px;-webkit-text-stroke:.25px #0f141a;">1 Permission entry</span>
<div style="left:1466.0px;top:346px;width:1px;height:40px;background:#c6c6cd;"></div>
<div style="left:1861.0px;top:346px;width:1px;height:40px;background:#c6c6cd;"></div>
<div style="left:2255.1px;top:346px;width:1px;height:40px;background:#c6c6cd;"></div>
<div style="left:1466.0px;top:406px;width:1px;height:40px;background:#c6c6cd;"></div>
<div style="left:1861.0px;top:406px;width:1px;height:40px;background:#c6c6cd;"></div>
<span class="t" style="left:1092.00px;top:500.25px;font-size:15.8px;line-height:21px;color:#006ce0;font-weight:700;letter-spacing:-0.078px;">Inbound rules</span>
<span class="t" style="left:1238.40px;top:500.25px;font-size:15.8px;line-height:21px;color:#424650;font-weight:700;letter-spacing:0.031px;">Outbound rules</span>
<span class="t" style="left:1398.40px;top:500.25px;font-size:15.8px;line-height:21px;color:#424650;font-weight:700;letter-spacing:0.029px;">Sharing -</span>
<span class="t" style="left:1471.50px;top:500.25px;font-size:15.8px;line-height:21px;color:#424650;font-style:italic;letter-spacing:-0.242px;-webkit-text-stroke:.3px #424650;">new</span>
<span class="t" style="left:1543.00px;top:500.25px;font-size:15.8px;line-height:21px;color:#424650;font-weight:700;transform:scaleX(0.9521);">VPC associations -</span>
<span class="t" style="left:1683.00px;top:500.25px;font-size:15.8px;line-height:21px;color:#424650;font-style:italic;letter-spacing:-0.242px;-webkit-text-stroke:.3px #424650;">new</span>
<span class="t" style="left:1753.60px;top:500.25px;font-size:15.8px;line-height:21px;color:#424650;font-weight:700;transform:scaleX(0.9523);">Tags</span>
<div style="left:1216.2px;top:496.3px;width:1px;height:27.2px;background:#c6c6cd;"></div>
<div style="left:1376.2px;top:496.3px;width:1px;height:27.2px;background:#c6c6cd;"></div>
<div style="left:1520.1px;top:496.3px;width:1px;height:27.2px;background:#c6c6cd;"></div>
<div style="left:1731.3px;top:496.3px;width:1px;height:27.2px;background:#c6c6cd;"></div>
<div style="left:1071px;top:533px;width:1580px;height:1px;background:#c6c6cd;"></div>
<div style="left:1073px;top:529px;width:143px;height:4.5px;background:#006ce0;border-radius:2px;"></div>
<div style="left:1069px;top:532px;width:1583.5px;height:324.5px;border:2px solid #006ce0;border-radius:18px;"></div>
<div style="left:1071px;top:570px;width:1580px;height:269px;border:1px solid #c6c6cd;border-radius:16px;background:#fff;overflow:hidden;"></div>
<span class="t" style="left:1091.70px;top:586.25px;font-size:20px;line-height:26px;color:#0f141a;font-weight:700;transform:scaleX(0.9552);">Inbound rules</span>
<span class="t" style="left:1223.70px;top:586.25px;font-size:20px;line-height:26px;color:#656871;transform:scaleX(0.9119);">(4)</span>
<div style="left:2287px;top:582.5px;width:32px;height:32px;border:2px solid #006ce0;border-radius:50%;"></div>
<svg style="left:2294.500px;top:590px" width="17" height="17" viewBox="0 0 17 17"><path d="M14.300 6.300A6.300 6.300 0 1 0 14.800 8.500" fill="none" stroke="#006ce0" stroke-width="2"/><path d="M14.800 1.500v5h-5" fill="none" stroke="#006ce0" stroke-width="2" stroke-linejoin="round"/></svg>
<div style="left:2327px;top:582.5px;width:127.5px;height:32px;border:2px solid #b4b4bb;border-radius:16px;"></div>
<span class="t" style="left:2349.30px;top:591.25px;font-size:13px;line-height:17px;color:#8c8c94;font-weight:700;transform:scaleX(1.0654);">Manage tags</span>
<div style="left:2463px;top:582.5px;width:167px;height:32px;border:2px solid #006ce0;border-radius:16px;"></div>
<span class="t" style="left:2485.30px;top:591.25px;font-size:13px;line-height:17px;color:#006ce0;font-weight:700;transform:scaleX(1.0683);">Edit inbound rules</span>
<div style="left:1092.4px;top:623.5px;width:647.4px;height:31px;border:2px solid #8c8c94;border-radius:8px;background:#fff;"></div>
<svg style="left:1104.500px;top:631.500px" width="16" height="16" viewBox="0 0 16 16"><circle cx="6.500" cy="6.500" r="5" fill="none" stroke="#656871" stroke-width="1.900"/><path d="M10.300 10.300 14.800 14.800" stroke="#656871" stroke-width="1.900" stroke-linecap="round"/></svg>
<span class="t" style="left:1129.50px;top:632.25px;font-size:13px;line-height:17px;color:#656871;font-style:italic;letter-spacing:0.059px;">Search</span>
<svg style="left:2514px;top:631.700px" width="9" height="14" viewBox="0 0 9 14"><path d="M7.500 1 1.700 7l5.800 6" fill="none" stroke="#b4b4bb" stroke-width="1.700" stroke-linejoin="round"/></svg>
<span class="t" style="left:2543.70px;top:632.25px;font-size:13px;line-height:17px;color:#0f141a;font-weight:700;">1</span>
<svg style="left:2570px;top:631.700px" width="9" height="14" viewBox="0 0 9 14"><path d="M1.500 1 7.300 7l-5.800 6" fill="none" stroke="#b4b4bb" stroke-width="1.700" stroke-linejoin="round"/></svg>
<div style="left:2593px;top:623px;width:1px;height:32px;background:#c6c6cd;"></div>
<svg style="left:2607px;top:629.900px" width="17.500" height="17.500" viewBox="0 0 16 16"><path d="M7.100.9h1.800l.4 1.700c.4.100.8.300 1.200.500l1.500-.900 1.300 1.300-.900 1.500c.2.400.4.800.5 1.200l1.700.4v1.800l-1.700.4c-.1.400-.3.800-.5 1.200l.9 1.500-1.300 1.300-1.500-.900c-.4.200-.8.400-1.200.5l-.4 1.700H7.100l-.4-1.700c-.4-.1-.8-.3-1.200-.5l-1.500.9-1.300-1.300.9-1.500c-.2-.4-.4-.8-.5-1.200L1.400 8.400V6.600l1.700-.4c.1-.4.3-.8.5-1.200l-.9-1.500L4 2.200l1.500.9c.4-.2.8-.4 1.200-.5z" fill="none" stroke="#424650" stroke-width="1.800" stroke-linejoin="round" transform="translate(0,.5)"/><circle cx="8" cy="8" r="2.100" fill="none" stroke="#424650" stroke-width="1.700"/></svg>
<div style="left:1087px;top:669.4px;width:16px;height:15.4px;border:2px solid #8c8c94;border-radius:4px;background:#fff;"></div>
<div style="left:1112.8px;top:669.3px;width:2px;height:17px;background:#c6c6cd;"></div>
<span class="t" style="left:1130.80px;top:669.25px;font-size:14px;line-height:18px;color:#424650;font-weight:700;transform:scaleX(0.9753);">Name</span>
<span class="t" style="left:1310.90px;top:669.25px;font-size:14px;line-height:18px;color:#424650;font-weight:700;letter-spacing:-0.150px;">Security group rule ID</span>
<span class="t" style="left:1510.60px;top:669.25px;font-size:14px;line-height:18px;color:#424650;font-weight:700;transform:scaleX(0.9569);">IP version</span>
<span class="t" style="left:1710.70px;top:669.25px;font-size:14px;line-height:18px;color:#424650;font-weight:700;transform:scaleX(0.9703);">Type</span>
<span class="t" style="left:1910.80px;top:669.25px;font-size:14px;line-height:18px;color:#424650;font-weight:700;letter-spacing:-0.226px;">Protocol</span>
<span class="t" style="left:2110.90px;top:669.25px;font-size:14px;line-height:18px;color:#424650;font-weight:700;letter-spacing:-0.102px;">Port range</span>
<span class="t" style="left:2310.60px;top:669.25px;font-size:14px;line-height:18px;color:#424650;font-weight:700;transform:scaleX(0.9206);">Source</span>
<span class="t" style="left:2510.70px;top:669.25px;font-size:14px;line-height:18px;color:#424650;font-weight:700;letter-spacing:-0.222px;">Description</span>
<div style="left:1292.8px;top:669.5px;width:2px;height:17px;background:#8c8c94;"></div>
<svg style="left:1269.3px;top:674px" width="10" height="8" viewBox="0 0 10 8"><path d="M1.300 1h7.400L5 6.600z" fill="none" stroke="#424650" stroke-width="1.700" stroke-linejoin="round"/></svg>
<div style="left:1492.8px;top:669.5px;width:2px;height:17px;background:#8c8c94;"></div>
<svg style="left:1469.3px;top:674px" width="10" height="8" viewBox="0 0 10 8"><path d="M1.300 1h7.400L5 6.600z" fill="none" stroke="#424650" stroke-width="1.700" stroke-linejoin="round"/></svg>
<div style="left:1692.8px;top:669.5px;width:2px;height:17px;background:#8c8c94;"></div>
<svg style="left:1669.3px;top:674px" width="10" height="8" viewBox="0 0 10 8"><path d="M1.300 1h7.400L5 6.600z" fill="none" stroke="#424650" stroke-width="1.700" stroke-linejoin="round"/></svg>
<div style="left:1892.8px;top:669.5px;width:2px;height:17px;background:#8c8c94;"></div>
<svg style="left:1869.3px;top:674px" width="10" height="8" viewBox="0 0 10 8"><path d="M1.300 1h7.400L5 6.600z" fill="none" stroke="#424650" stroke-width="1.700" stroke-linejoin="round"/></svg>
<div style="left:2092.8px;top:669.5px;width:2px;height:17px;background:#8c8c94;"></div>
<svg style="left:2069.3px;top:674px" width="10" height="8" viewBox="0 0 10 8"><path d="M1.300 1h7.400L5 6.600z" fill="none" stroke="#424650" stroke-width="1.700" stroke-linejoin="round"/></svg>
<div style="left:2292.8px;top:669.5px;width:2px;height:17px;background:#8c8c94;"></div>
<svg style="left:2269.3px;top:674px" width="10" height="8" viewBox="0 0 10 8"><path d="M1.300 1h7.400L5 6.600z" fill="none" stroke="#424650" stroke-width="1.700" stroke-linejoin="round"/></svg>
<div style="left:2492.8px;top:669.5px;width:2px;height:17px;background:#8c8c94;"></div>
<svg style="left:2469.3px;top:674px" width="10" height="8" viewBox="0 0 10 8"><path d="M1.300 1h7.400L5 6.600z" fill="none" stroke="#424650" stroke-width="1.700" stroke-linejoin="round"/></svg>
<div style="left:1076px;top:692px;width:1574.5px;height:1px;background:#c6c6cd;"></div>
<div style="left:1087px;top:701.3px;width:16px;height:15.4px;border:2px solid #8c8c94;border-radius:4px;background:#fff;"></div>
<span class="t" style="left:1130.80px;top:700.25px;font-size:14px;line-height:18px;color:#0f141a;font-weight:700;transform:scaleX(0.8978);-webkit-text-stroke:.25px #0f141a;">–</span>
<span class="t" style="left:1310.90px;top:700.25px;font-size:14px;line-height:18px;color:#0f141a;letter-spacing:0.286px;-webkit-text-stroke:.25px #0f141a;">sgr-0ed1995f6a3d34a2b</span>
<span class="t" style="left:1510.60px;top:700.25px;font-size:14px;line-height:18px;color:#0f141a;letter-spacing:-0.205px;-webkit-text-stroke:.25px #0f141a;">IPv4</span>
<span class="t" style="left:1710.70px;top:700.25px;font-size:14px;line-height:18px;color:#0f141a;transform:scaleX(0.8681);-webkit-text-stroke:.25px #0f141a;">SSH</span>
<span class="t" style="left:1910.80px;top:700.25px;font-size:14px;line-height:18px;color:#0f141a;transform:scaleX(0.8464);-webkit-text-stroke:.25px #0f141a;">TCP</span>
<span class="t" style="left:2110.90px;top:700.25px;font-size:14px;line-height:18px;color:#0f141a;letter-spacing:0.122px;-webkit-text-stroke:.25px #0f141a;">22</span>
<span class="t" style="left:2310.60px;top:700.25px;font-size:14px;line-height:18px;color:#0f141a;transform:scaleX(1.0644);-webkit-text-stroke:.25px #0f141a;">152.15.112.252/32</span>
<span class="t" style="left:2510.70px;top:700.25px;font-size:14px;line-height:18px;color:#0f141a;letter-spacing:-0.193px;-webkit-text-stroke:.25px #0f141a;">Pranav - IP</span>
<div style="left:1087px;top:732.3px;width:16px;height:15.4px;border:2px solid #8c8c94;border-radius:4px;background:#fff;"></div>
<span class="t" style="left:1130.80px;top:731.25px;font-size:14px;line-height:18px;color:#0f141a;font-weight:700;transform:scaleX(0.8978);-webkit-text-stroke:.25px #0f141a;">–</span>
<span class="t" style="left:1310.90px;top:731.25px;font-size:14px;line-height:18px;color:#0f141a;letter-spacing:0.190px;-webkit-text-stroke:.25px #0f141a;">sgr-0421cee4960f489ea</span>
<span class="t" style="left:1510.60px;top:731.25px;font-size:14px;line-height:18px;color:#0f141a;letter-spacing:-0.205px;-webkit-text-stroke:.25px #0f141a;">IPv4</span>
<span class="t" style="left:1710.70px;top:731.25px;font-size:14px;line-height:18px;color:#0f141a;transform:scaleX(0.9218);-webkit-text-stroke:.25px #0f141a;">HTTPS</span>
<span class="t" style="left:1910.80px;top:731.25px;font-size:14px;line-height:18px;color:#0f141a;transform:scaleX(0.8464);-webkit-text-stroke:.25px #0f141a;">TCP</span>
<span class="t" style="left:2110.90px;top:731.25px;font-size:14px;line-height:18px;color:#0f141a;letter-spacing:0.170px;-webkit-text-stroke:.25px #0f141a;">443</span>
<span class="t" style="left:2310.60px;top:731.25px;font-size:14px;line-height:18px;color:#0f141a;transform:scaleX(1.0606);-webkit-text-stroke:.25px #0f141a;">0.0.0.0/0</span>
<span class="t" style="left:2510.70px;top:731.25px;font-size:14px;line-height:18px;color:#0f141a;transform:scaleX(1.0568);-webkit-text-stroke:.25px #0f141a;">allow all on port 443</span>
<div style="left:1087px;top:763.3px;width:16px;height:15.4px;border:2px solid #8c8c94;border-radius:4px;background:#fff;"></div>
<span class="t" style="left:1130.80px;top:762.25px;font-size:14px;line-height:18px;color:#0f141a;font-weight:700;transform:scaleX(0.8978);-webkit-text-stroke:.25px #0f141a;">–</span>
<span class="t" style="left:1310.90px;top:762.25px;font-size:14px;line-height:18px;color:#0f141a;letter-spacing:0.275px;-webkit-text-stroke:.25px #0f141a;">sgr-0d4fe46227ecf4c3d</span>
<span class="t" style="left:1510.60px;top:762.25px;font-size:14px;line-height:18px;color:#0f141a;letter-spacing:-0.205px;-webkit-text-stroke:.25px #0f141a;">IPv4</span>
<span class="t" style="left:1710.70px;top:762.25px;font-size:14px;line-height:18px;color:#0f141a;transform:scaleX(0.9381);-webkit-text-stroke:.25px #0f141a;">HTTP</span>
<span class="t" style="left:1910.80px;top:762.25px;font-size:14px;line-height:18px;color:#0f141a;transform:scaleX(0.8464);-webkit-text-stroke:.25px #0f141a;">TCP</span>
<span class="t" style="left:2110.90px;top:762.25px;font-size:14px;line-height:18px;color:#0f141a;letter-spacing:0.122px;-webkit-text-stroke:.25px #0f141a;">80</span>
<span class="t" style="left:2310.60px;top:762.25px;font-size:14px;line-height:18px;color:#0f141a;transform:scaleX(1.0606);-webkit-text-stroke:.25px #0f141a;">0.0.0.0/0</span>
<span class="t" style="left:2510.70px;top:762.25px;font-size:14px;line-height:18px;color:#0f141a;transform:scaleX(1.0561);-webkit-text-stroke:.25px #0f141a;">allow all on port 80</span>
<div style="left:1087px;top:794.3px;width:16px;height:15.4px;border:2px solid #8c8c94;border-radius:4px;background:#fff;"></div>
<span class="t" style="left:1130.80px;top:793.25px;font-size:14px;line-height:18px;color:#0f141a;font-weight:700;transform:scaleX(0.8978);-webkit-text-stroke:.25px #0f141a;">–</span>
<span class="t" style="left:1310.90px;top:793.25px;font-size:14px;line-height:18px;color:#0f141a;letter-spacing:0.258px;-webkit-text-stroke:.25px #0f141a;">sgr-02a164185aea56ff8</span>
<span class="t" style="left:1510.60px;top:793.25px;font-size:14px;line-height:18px;color:#0f141a;letter-spacing:-0.205px;-webkit-text-stroke:.25px #0f141a;">IPv4</span>
<span class="t" style="left:1710.70px;top:793.25px;font-size:14px;line-height:18px;color:#0f141a;transform:scaleX(0.8681);-webkit-text-stroke:.25px #0f141a;">SSH</span>
<span class="t" style="left:1910.80px;top:793.25px;font-size:14px;line-height:18px;color:#0f141a;transform:scaleX(0.8464);-webkit-text-stroke:.25px #0f141a;">TCP</span>
<span class="t" style="left:2110.90px;top:793.25px;font-size:14px;line-height:18px;color:#0f141a;letter-spacing:0.122px;-webkit-text-stroke:.25px #0f141a;">22</span>
<span class="t" style="left:2310.60px;top:793.25px;font-size:14px;line-height:18px;color:#0f141a;transform:scaleX(1.0512);-webkit-text-stroke:.25px #0f141a;">75.89.27.162/32</span>
<span class="t" style="left:2510.70px;top:793.25px;font-size:14px;line-height:18px;color:#0f141a;-webkit-text-stroke:.25px #0f141a;letter-spacing:.1px;width:139.500px;overflow:hidden;">Encantada-de-conocerte</span>
<div style="left:1076px;top:723.9px;width:1574.5px;height:1px;background:#ebebf0;"></div>
<div style="left:1076px;top:755.0px;width:1574.5px;height:1px;background:#ebebf0;"></div>
<div style="left:1076px;top:786.0px;width:1574.5px;height:1px;background:#ebebf0;"></div>
<div style="left:1072px;top:823px;width:1578px;height:15px;background:#fafafa;border-top:1px solid #e8e8e8;border-radius:0 0 15px 15px;"></div>
<div style="left:1090.7px;top:827.3px;width:1494px;height:7.7px;background:#c1c1c1;border-radius:4px;"></div>
</main>
</body>
</html>
